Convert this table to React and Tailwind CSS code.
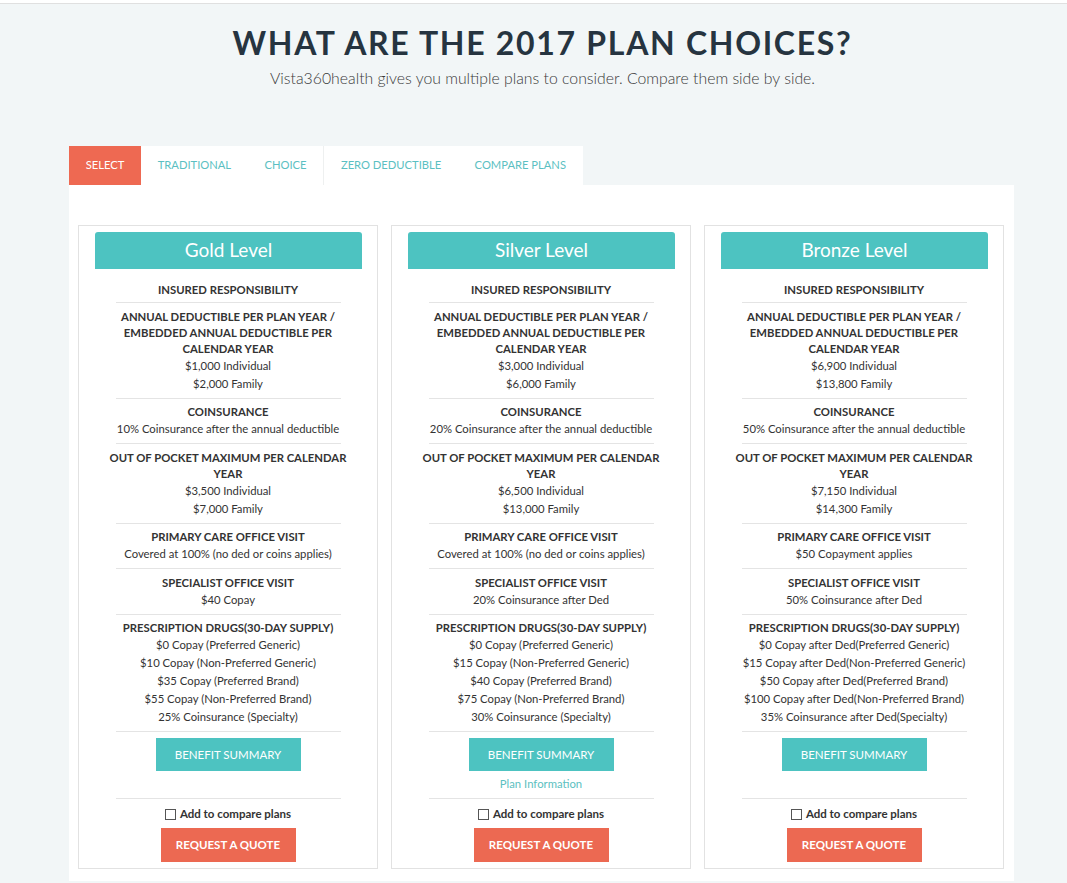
import React from "react";

const plans = [
  {
    name: "Gold Level",
    ded: ["$1,000 Individual", "$2,000 Family"],
    coins: "10% Coinsurance after the annual deductible",
    oop: ["$3,500 Individual", "$7,000 Family"],
    primary: "Covered at 100% (no ded or coins applies)",
    specialist: "$40 Copay",
    rx: [
      "$0 Copay (Preferred Generic)",
      "$10 Copay (Non-Preferred Generic)",
      "$35 Copay (Preferred Brand)",
      "$55 Copay (Non-Preferred Brand)",
      "25% Coinsurance (Specialty)",
    ],
  },
  {
    name: "Silver Level",
    ded: ["$3,000 Individual", "$6,000 Family"],
    coins: "20% Coinsurance after the annual deductible",
    oop: ["$6,500 Individual", "$13,000 Family"],
    primary: "Covered at 100% (no ded or coins applies)",
    specialist: "20% Coinsurance after Ded",
    rx: [
      "$0 Copay (Preferred Generic)",
      "$15 Copay (Non-Preferred Generic)",
      "$40 Copay (Preferred Brand)",
      "$75 Copay (Non-Preferred Brand)",
      "30% Coinsurance (Specialty)",
    ],
    planInfo: true,
  },
  {
    name: "Bronze Level",
    ded: ["$6,900 Individual", "$13,800 Family"],
    coins: "50% Coinsurance after the annual deductible",
    oop: ["$7,150 Individual", "$14,300 Family"],
    primary: "$50 Copayment applies",
    specialist: "50% Coinsurance after Ded",
    rx: [
      "$0 Copay after Ded(Preferred Generic)",
      "$15 Copay after Ded(Non-Preferred Generic)",
      "$50 Copay after Ded(Preferred Brand)",
      "$100 Copay after Ded(Non-Preferred Brand)",
      "35% Coinsurance after Ded(Specialty)",
    ],
  },
];

const tabs = ["SELECT", "TRADITIONAL", "CHOICE", "ZERO DEDUCTIBLE", "COMPARE PLANS"];

function Divider() {
  return <div className="w-[225px] mx-auto h-px bg-[#e4e4e4]"></div>;
}

function Section({ title, values, first }) {
  return (
    <>
      <div className={first ? "pb-[4px]" : "pt-[5.5px] pb-[5px]"}>
        <div className="font-bold text-[11.3px] leading-[16px] uppercase">{title}</div>
        {values.map((v) => (
          <div key={v} className="text-[11.3px] leading-[18px]">
            {v}
          </div>
        ))}
      </div>
      <Divider />
    </>
  );
}

function PlanCard({ plan }) {
  return (
    <div className="border border-[#e2e2e2] bg-white pt-[6px] pb-[6px] flex flex-col items-center">
      <div className="w-[267px] h-[37px] ml-[1px] bg-[#4dc3c1] rounded-t-[3px] flex items-center justify-center text-white text-[19px]">
        {plan.name}
      </div>
      <div className="w-[240px] mt-[13px] text-center text-[#333]">
        <Section title="Insured Responsibility" values={[]} first />
        <Section
          title="Annual Deductible per plan year / Embedded Annual Deductible per calendar year"
          values={plan.ded}
        />
        <Section title="Coinsurance" values={[plan.coins]} />
        <Section title="Out of Pocket Maximum per calendar year" values={plan.oop} />
        <Section title="Primary Care Office Visit" values={[plan.primary]} />
        <Section title="Specialist Office Visit" values={[plan.specialist]} />
        <Section title="Prescription Drugs(30-Day Supply)" values={plan.rx} />
        <div className="pt-[6px] flex flex-col items-center">
          <button className="w-[145px] h-[33px] bg-[#4dc3c1] text-white text-[11.5px] uppercase">
            Benefit Summary
          </button>
          <div className="h-[27px] flex items-center text-[11.3px] text-[#5cbfc1]">
            {plan.planInfo ? "Plan Information" : ""}
          </div>
        </div>
        <Divider />
        <div className="pt-[7px] flex flex-col items-center">
          <label className="flex items-center gap-[4px] text-[11.5px] font-bold leading-[16px] text-[#333]">
            <span className="w-[11px] h-[11px] border border-[#555] bg-white inline-block"></span>
            Add to compare plans
          </label>
          <button className="mt-[6px] w-[135px] h-[34px] bg-[#ec6952] text-white text-[11.5px] font-bold uppercase">
            Request a Quote
          </button>
        </div>
      </div>
    </div>
  );
}

export default function App() {
  return (
    <div className="min-h-[883px] bg-[#f2f6f7] font-['Lato',sans-serif] overflow-hidden">
      <div className="h-[4px] bg-white border-b border-[#e0e0e0]"></div>
      <div className="text-center pt-[19px] pl-[18px]">
        <h1 className="text-[32px] leading-[40px] font-bold tracking-[1.7px] text-[#263440]">
          WHAT ARE THE 2017 PLAN CHOICES?
        </h1>
        <p className="mt-[4px] text-[15.8px] leading-[22px] font-light text-[#3a3a3a]">
          Vista360health gives you multiple plans to consider. Compare them side by side.
        </p>
      </div>
      <div className="ml-[69px] mt-[57px] w-[945px]">
        <div className="flex h-[39px]">
          {tabs.map((t, i) => (
            <div
              key={t}
              className={
                (i === 0 ? "bg-[#ee6952] text-white" : "bg-white text-[#5bbfc2]") +
                (i === 3 ? " border-l border-[#eef0f0]" : "") +
                " px-[16.7px] flex items-center text-[11.2px] uppercase"
              }
            >
              {t}
            </div>
          ))}
        </div>
        <div className="bg-white pt-[40px] pl-[9px] pb-[12px] grid grid-cols-[300px_300px_300px] gap-[13px]">
          {plans.map((p) => (
            <PlanCard key={p.name} plan={p} />
          ))}
        </div>
      </div>
    </div>
  );
}
